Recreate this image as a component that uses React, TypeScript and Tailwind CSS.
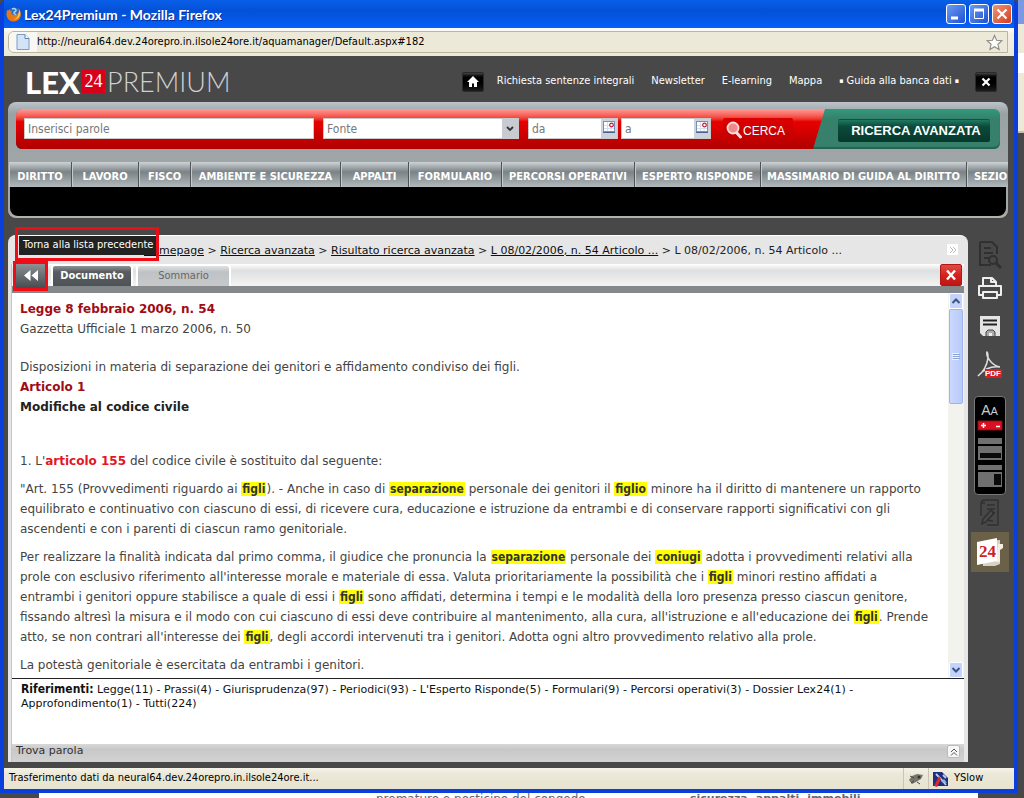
import React from "react";

const verdana = "font-['DejaVu_Sans',sans-serif]";
const tahoma = "font-['DejaVu_Sans_Condensed','DejaVu_Sans',sans-serif]";

function FirefoxIcon() {
  return (
    <svg viewBox="0 0 16 16" className="size-4" aria-hidden="true">
      <circle cx="8.500" cy="7.500" r="6" fill="#2b6fc4" />
      <path d="M6 3c2-1 4 0 4 1.500s-2 1-2 2.500 2 1 3 3" fill="none" stroke="#a6d4f5" strokeWidth="1.500" />
      <path d="M1 4c1 1 2 0 3-1-.5 2 1 2 2.500 2.500C5 6 5 7 6 8c1 1.500 3 1.500 5 .5 2-1 2.500-4 1-6.500 5 4 3.500 13-4 13.500C3 16 .500 11.500.500 8 .500 6 1 5 1 4z" fill="#e87817" />
      <path d="M13.500 4c2 5-1 9.500-6 9.500 3-1 5-3 5-6z" fill="#fbd25a" />
    </svg>
  );
}

function MagnifierIcon() {
  return (
    <svg viewBox="0 0 16 18" className="h-[18px] w-4" aria-hidden="true">
      <path d="M10 11l4.500 5" stroke="#f6dede" strokeWidth="3" strokeLinecap="round" />
      <circle cx="7" cy="7" r="5.500" fill="#f08a8a" stroke="#f9dcdc" strokeWidth="1.800" />
    </svg>
  );
}

function CalendarIcon() {
  return (
    <svg viewBox="0 0 12 12" className="size-3" aria-hidden="true">
      <rect x=".5" y=".5" width="11" height="10" fill="#fff" stroke="#7591b8" />
      <path d="M1 4.500h10M1 7.500h10M4.500 1v9M8 4v6" stroke="#d5deea" />
      <path d="M0 11.500h12" stroke="#47648f" />
      <circle cx="8.500" cy="4" r="1.800" fill="#fff" stroke="#c2183a" strokeWidth="1.200" />
    </svg>
  );
}

function DateField({ label, width }: { label: string; width: string }) {
  return (
    <div className={`flex h-[21px] border border-[#c9c9c9] bg-white ${width}`}>
      <input aria-label={label} placeholder={label} className={`min-w-0 flex-1 px-[3px] text-[12px] outline-none placeholder:text-[#777] ${tahoma}`} />
      <button aria-label={`Calendario ${label}`} className="flex w-4 justify-center bg-[#cdd3dc] pt-[2px]">
        <CalendarIcon />
      </button>
    </div>
  );
}

const links = ["Richiesta sentenze integrali", "Newsletter", "E-learning", "Mappa"];

const sections = [
  { name: "DIRITTO", width: "w-[63px]" },
  { name: "LAVORO", width: "w-[67px]" },
  { name: "FISCO", width: "w-[52px]" },
  { name: "AMBIENTE E SICUREZZA", width: "w-[150px]" },
  { name: "APPALTI", width: "w-[68px]" },
  { name: "FORMULARIO", width: "w-[93px]" },
  { name: "PERCORSI OPERATIVI", width: "w-[133px]" },
  { name: "ESPERTO RISPONDE", width: "w-[126px]" },
  { name: "MASSIMARIO DI GUIDA AL DIRITTO", width: "w-[206px]" },
  { name: "SEZIO", width: "w-[50px] pr-[2px]" },
];

function TitleBar() {
  const box = "flex size-5 items-center justify-center rounded-[3px] border border-white";
  return (
    <div className="flex h-7 items-center bg-linear-to-b from-[#0a5fe8] via-[#0450d8] via-40% to-[#0660fa] pr-[2px] pl-[2px]">
      <FirefoxIcon />
      <h1 className="flex-1 pt-px pl-[2px] font-['Lato',sans-serif] text-[14px] font-bold text-white [text-shadow:1px_1px_0_#0a2a90]">
        Lex24Premium - Mozilla Firefox
      </h1>
      <div className="flex gap-[3px]">
        <button aria-label="Riduci a icona" className={`${box} bg-linear-to-br from-[#6f9bf5] to-[#1c4fd0]`}>
          <svg viewBox="0 0 18 18" className="size-[18px]"><path d="M4 13h7" stroke="#fff" strokeWidth="3" /></svg>
        </button>
        <button aria-label="Ingrandisci" className={`${box} bg-linear-to-br from-[#6f9bf5] to-[#1c4fd0]`}>
          <svg viewBox="0 0 18 18" className="size-[18px]"><path d="M4.500 5v8.500h9V5" fill="none" stroke="#fff" /><path d="M4 5h10" stroke="#fff" strokeWidth="3" /></svg>
        </button>
        <button aria-label="Chiudi finestra" className={`${box} bg-linear-to-br from-[#f0937a] to-[#d03a12]`}>
          <svg viewBox="0 0 18 18" className="size-[18px]"><path d="M4.500 4.500l9 9M13.500 4.500l-9 9" stroke="#fff" strokeWidth="2.200" /></svg>
        </button>
      </div>
    </div>
  );
}

function AddressBar() {
  return (
    <div className="flex h-7 items-center bg-linear-to-b from-white via-[#f3f1e4] via-20% to-[#ece9d8] px-1 pr-[6px]">
      <div className="flex h-[22px] flex-1 items-center rounded-l-[6px] border border-[#b9b59f] bg-[#ece9d8]">
        <span className="flex h-5 w-7 items-center justify-center rounded-l-[5px] bg-[#f8f7f1]">
          <svg viewBox="0 0 14 16" className="h-4 w-[14px]" aria-hidden="true">
            <path d="M1 .500h8l4 4v11H1z" fill="#d3e4f8" stroke="#7d9cc4" />
            <path d="M9 .500v4h4" fill="#fff" stroke="#5b82b8" />
          </svg>
        </span>
        <input
          aria-label="Indirizzo"
          defaultValue="http://neural64.dev.24orepro.in.ilsole24ore.it/aquamanager/Default.aspx#182"
          className={`flex-1 bg-transparent pt-px text-[11px] text-black outline-none ${tahoma}`}
        />
        <button aria-label="Aggiungi ai preferiti" className="mr-1">
          <svg viewBox="0 0 18 18" className="size-[17px]">
            <path d="M9 1.500l2.200 5.200 5.600.500-4.200 3.700 1.300 5.500L9 13.500l-4.900 2.900 1.300-5.500L1.200 7.200l5.600-.500z" fill="#fdfdfb" stroke="#8f8f8a" strokeWidth="1.200" />
          </svg>
        </button>
      </div>
    </div>
  );
}

function SiteHeader() {
  const dark = "flex h-5 w-[22px] items-center justify-center rounded-[2px] border border-[#2a2a2a] bg-linear-to-b from-[#444] via-black via-30% to-[#1c1c1c]";
  const bullet = <span className="text-[7px]">▪</span>;
  return (
    <header className="flex h-[46px] items-center justify-between pt-[5px] pr-[17px] pl-[21px]">
      <div className="flex items-center font-['Lato',sans-serif] leading-6 text-white">
        <span className="text-[31px] font-black">LEX</span>
        <span className="ml-[2px] flex h-[23px] w-[23px] items-center justify-center bg-[#d9001b] pb-[2px] font-['Liberation_Serif',serif] text-[18px]">24</span>
        <span className="ml-[2px] text-[27px] font-light text-[#d0d0d0]">PREMIUM</span>
      </div>
      <nav className={`flex items-center text-[11px] text-white ${tahoma}`}>
        <button aria-label="Home" className={`mr-[13px] ${dark}`}>
          <svg viewBox="0 0 12 12" className="size-3"><path d="M6 0l6 6h-2v5H7V7.500H5V11H2V6H0z" fill="#fff" /></svg>
        </button>
        <div className="flex gap-[17px]">
          {links.map((l) => (
            <a key={l} href="#" className="whitespace-nowrap">{l}</a>
          ))}
          <a href="#" className="flex items-center gap-[3px] whitespace-nowrap">{bullet}Guida alla banca dati{bullet}</a>
        </div>
        <button aria-label="Esci" className={`ml-[16px] ${dark}`}>
          <svg viewBox="0 0 10 10" className="size-[10px]"><path d="M1.500 1.500l7 7M8.500 1.500l-7 7" stroke="#fff" strokeWidth="2.200" /></svg>
        </button>
      </nav>
    </header>
  );
}

function SearchPanel() {
  return (
    <section className="mr-[6px] ml-1 overflow-hidden rounded-[8px] border-b-2 border-[#b3b1a8] bg-linear-to-b from-[#bcc4c9] via-[#9ba2a5] via-10% to-[#a3a9ab]">
      <div className="px-2 pt-[7px]">
        <form className="flex h-10 overflow-hidden rounded-[6px] bg-linear-to-b from-[#2f9a7c] via-[#37806b] via-25% to-[#37806b] shadow-[inset_0_-2px_1px_#24634f]" onSubmit={(e) => e.preventDefault()}>
          <div className="flex flex-1 items-start bg-linear-to-b from-[#ff9a9a] via-[#ea0000] via-30% to-[#b00000] pt-[9px] pl-2 [clip-path:polygon(0_0,100%_0,calc(100%-12px)_100%,0_100%)]">
            <input aria-label="Inserisci parole" placeholder="Inserisci parole" className={`h-[21px] w-[290px] border border-[#c9c9c9] bg-white px-[3px] text-[12px] outline-none placeholder:text-[#777] ${tahoma}`} />
            <div className="ml-[9px] flex h-[21px] w-[196px] border border-[#c9c9c9] bg-white">
              <input aria-label="Fonte" placeholder="Fonte" className={`min-w-0 flex-1 px-[3px] text-[12px] outline-none placeholder:text-[#777] ${tahoma}`} />
              <button aria-label="Apri elenco fonti" className="flex w-4 items-center justify-center bg-[#c8ccd2]">
                <svg viewBox="0 0 8 6" className="h-[6px] w-2"><path d="M1 1l3 3 3-3" fill="none" stroke="#333" strokeWidth="1.800" /></svg>
              </button>
            </div>
            <div className="ml-[9px] flex gap-[3px]">
              <DateField label="da" width="w-[90px]" />
              <DateField label="a" width="w-[90px]" />
            </div>
            <button className="ml-3 flex h-[24px] w-[70px] items-center rounded-[2px] bg-linear-to-b from-[#dc0000] to-[#c00000] pl-[3px] font-['Liberation_Sans',sans-serif] text-[12px] text-white">
              <MagnifierIcon />
              <span className="pt-px pl-px">CERCA</span>
            </button>
          </div>
          <div className="flex w-[175px] items-start justify-end pt-[10px] pr-[10px]">
            <button className="h-[23px] w-[152px] rounded-[2px] border-t border-[#0d5441] bg-linear-to-b from-[#1f7a62] via-[#0b4a3a] via-30% to-[#06392c] pl-1 font-['Liberation_Sans',sans-serif] text-[13px] font-bold whitespace-nowrap text-white">
              RICERCA AVANZATA
            </button>
          </div>
        </form>
      </div>
      <nav className={`mt-[13px] flex h-[25px] overflow-hidden px-px text-[11px] font-bold text-white ${tahoma}`}>
        {sections.map((s) => (
          <a key={s.name} href="#" className={`flex shrink-0 items-center justify-center border-r border-r-[#4d5356] bg-linear-to-b from-[#cfd3d6] via-[#7b8387] via-40% to-[#b3babd] pt-[5px] whitespace-nowrap shadow-[inset_1px_0_0_#c5cacc] ${s.width}`}>
            {s.name}
          </a>
        ))}
      </nav>
      <div className="mx-[2px] h-[29px] rounded-b-[8px] bg-black" />
    </section>
  );
}

const Hit = ({ children }: { children: React.ReactNode }) => (
  <mark className={`bg-[#ffff00] px-px font-bold text-[#333] ${tahoma}`}>{children}</mark>
);

function Crumbs() {
  const crumb = "text-[#111] underline";
  return (
    <div className={`relative flex h-7 items-center pt-[2px] pl-[133px] text-[11px] whitespace-nowrap text-[#222] ${verdana}`}>
      <p>
        <a href="#" className={crumb}>Homepage</a> &gt; <a href="#" className={crumb}>Ricerca avanzata</a> &gt;{" "}
        <a href="#" className={crumb}>Risultato ricerca avanzata</a> &gt;{" "}
        <a href="#" className={crumb}>L 08/02/2006, n. 54 Articolo ...</a> &gt; L 08/02/2006, n. 54 Articolo ...
      </p>
      <button aria-label="Espandi" className="absolute top-2 right-[6px] flex h-[11px] w-[11px] items-center justify-center bg-white">
        <svg viewBox="0 0 8 8" className="size-2"><path d="M1 1l3 3-3 3M4 1l3 3-3 3" fill="none" stroke="#bbb" /></svg>
      </button>
      <div className="absolute -top-[9px] left-1 z-10 h-[34px] w-[144px] border-[3px] border-[#ee0d17] pt-[6px] pl-px">
        <div role="tooltip" className={`h-[19px] bg-[#222] pl-1 text-[11px] leading-[18px] whitespace-nowrap text-white ${tahoma}`}>
          Torna alla lista precedente
        </div>
      </div>
    </div>
  );
}

function Tabs() {
  return (
    <div className={`flex h-[29px] items-start border-b-[7px] border-[#84888b] bg-linear-to-b from-white via-[#dedfe0] via-30% to-[#f4f4f4] text-[11px] ${verdana}`}>
      <button aria-label="Torna alla lista precedente" className="relative z-20 mt-[-3px] ml-px flex h-[30px] w-[35px] shrink-0 items-center justify-center border-[3px] border-[#ee0d17] bg-linear-to-b from-[#8b9194] to-[#474c50]">
        <svg viewBox="0 0 16 12" className="h-3 w-4"><path d="M7.500 0v11L1 5.500zM15 0v11L8.500 5.500z" fill="#fff" /></svg>
      </button>
      <button className="ml-[3px] h-[22px] w-[82px] rounded-t-[4px] border-2 border-b-0 border-white bg-linear-to-b from-[#8d9396] via-[#565c60] via-30% to-[#4d5357] text-[11px] font-bold text-white">
        <span className={tahoma}>Documento</span>
      </button>
      <button className={`ml-[3px] h-[22px] w-[95px] rounded-t-[4px] border-2 border-b-0 border-white bg-linear-to-b from-[#e0e2e3] via-[#bfc2c4] via-30% to-[#c6c9ca] text-[11px] text-[#666] ${tahoma}`}>Sommario</button>
      <button aria-label="Chiudi documento" className="mr-[2px] ml-auto flex h-[22px] w-[22px] items-center justify-center rounded-[2px] border border-[#b01818] bg-linear-to-b from-[#e04a44] via-[#d6221e] via-50% to-[#c01512]">
        <svg viewBox="0 0 12 12" className="size-3"><path d="M2 1.500l8 9M10 1.500l-8 9" stroke="#fff" strokeWidth="2.400" /></svg>
      </button>
    </div>
  );
}

function Scrollbar() {
  const end = "flex h-4 w-full items-center justify-center rounded-[2px] border border-white bg-[#c3d3fb]";
  return (
    <div className="flex w-4 flex-col bg-[#f3f3ee] px-px">
      <button aria-label="Scorri su" className={end}>
        <svg viewBox="0 0 10 8" className="h-2 w-[10px]"><path d="M1.500 6L5 2.500 8.500 6" fill="none" stroke="#3d5583" strokeWidth="2" /></svg>
      </button>
      <div className="flex h-[95px] items-center justify-center rounded-[2px] border border-[#9db5ee] bg-linear-to-r from-[#c9d8fd] to-[#b9cafa]">
        <svg viewBox="0 0 8 8" className="size-2"><path d="M0 .500h7M0 2.500h7M0 4.500h7M0 6.500h7" stroke="#eef3ff" /><path d="M1 1.500h7M1 3.500h7M1 5.500h7" stroke="#8ca4dc" /></svg>
      </div>
      <div className="flex-1" />
      <button aria-label="Scorri giù" className={end}>
        <svg viewBox="0 0 10 8" className="h-2 w-[10px]"><path d="M1.500 2L5 5.500 8.500 2" fill="none" stroke="#3d5583" strokeWidth="2" /></svg>
      </button>
    </div>
  );
}

function DocumentText() {
  return (
    <article className={`min-w-0 flex-1 overflow-hidden pt-[6px] pl-2 text-[12px] leading-5 whitespace-nowrap text-[#444] ${verdana}`}>
      <h2 className="font-bold text-[#a00c14]">Legge 8 febbraio 2006, n. 54</h2>
      <p>Gazzetta Ufficiale 1 marzo 2006, n. 50</p>
      <p className="mt-[18px]">Disposizioni in materia di separazione dei genitori e affidamento condiviso dei figli.</p>
      <h3 className="font-bold text-[#a00c14]">Articolo 1</h3>
      <h4 className="font-bold text-[#222]">Modifiche al codice civile</h4>
      <div className="mt-[34px] flex flex-col gap-2">
        <p>1. L'<a href="#" className="font-bold text-[#e3171f]">articolo 155</a> del codice civile è sostituito dal seguente:</p>
        <p>
          "Art. 155 (Provvedimenti riguardo ai <Hit>figli</Hit>). - Anche in caso di <Hit>separazione</Hit> personale dei genitori il <Hit>figlio</Hit> minore ha il diritto di mantenere un rapporto<br />
          equilibrato e continuativo con ciascuno di essi, di ricevere cura, educazione e istruzione da entrambi e di conservare rapporti significativi con gli<br />
          ascendenti e con i parenti di ciascun ramo genitoriale.
        </p>
        <p>
          Per realizzare la finalità indicata dal primo comma, il giudice che pronuncia la <Hit>separazione</Hit> personale dei <Hit>coniugi</Hit> adotta i provvedimenti relativi alla<br />
          prole con esclusivo riferimento all'interesse morale e materiale di essa. Valuta prioritariamente la possibilità che i <Hit>figli</Hit> minori restino affidati a<br />
          entrambi i genitori oppure stabilisce a quale di essi i <Hit>figli</Hit> sono affidati, determina i tempi e le modalità della loro presenza presso ciascun genitore,<br />
          fissando altresì la misura e il modo con cui ciascuno di essi deve contribuire al mantenimento, alla cura, all'istruzione e all'educazione dei <Hit>figli</Hit>. Prende<br />
          atto, se non contrari all'interesse dei <Hit>figli</Hit>, degli accordi intervenuti tra i genitori. Adotta ogni altro provvedimento relativo alla prole.
        </p>
        <p>La potestà genitoriale è esercitata da entrambi i genitori.</p>
      </div>
    </article>
  );
}

function DocumentPanel() {
  return (
    <main className="ml-1 flex min-w-0 flex-1 flex-col rounded-t-[8px] border-t border-white bg-[#e6e6e6] pr-1 pl-[3px]">
      <Crumbs />
      <div className="flex flex-1 flex-col border-l border-[#c4c4cc] bg-white">
        <Tabs />
        <div className="flex min-h-0 flex-1">
          <DocumentText />
          <Scrollbar />
        </div>
        <div className={`h-[66px] border-t border-[#222] pt-[3px] pl-[9px] text-[11px] leading-[14px] text-[#111] ${verdana}`}>
          <b className={`text-[12px] ${tahoma}`}>Riferimenti:</b> Legge(11) - Prassi(4) - Giurisprudenza(97) - Periodici(93) - L'Esperto Risponde(5) - Formulari(9) - Percorsi operativi(3) - Dossier Lex24(1) -
          <br />
          Approfondimento(1) - Tutti(224)
        </div>
        <div className={`flex h-[18px] items-center justify-between bg-linear-to-b from-[#d8d8d8] via-[#c8c8c8] via-30% to-[#d2d2d2] pr-1 pb-[3px] pl-1 text-[11px] text-[#333] ${verdana}`}>
          <span>Trova parola</span>
          <button aria-label="Apri ricerca parola" className="flex size-[13px] items-center justify-center rounded-[2px] border border-[#bbb] bg-[#f6f6f6]">
            <svg viewBox="0 0 8 8" className="size-2"><path d="M1 4l3-3 3 3M1 7.500l3-3 3 3" fill="none" stroke="#555" /></svg>
          </button>
        </div>
      </div>
    </main>
  );
}

function ToolRail() {
  return (
    <aside className="flex w-[46px] flex-col items-center pt-1 pr-[3px]">
      <button aria-label="Cerca nel documento" className="h-[32px]">
        <svg viewBox="0 0 24 30" className="h-[30px] w-6" fill="none" stroke="#303030" strokeWidth="2">
          <path d="M2 2h12l5 5v7M2 2v23h11" /><path d="M6 8h7M6 13h9M6 18h6" /><circle cx="15" cy="20" r="4" /><path d="M18 23l5 5" strokeWidth="3" />
        </svg>
      </button>
      <button aria-label="Stampa" className="mt-[5px] h-6">
        <svg viewBox="0 0 26 24" className="h-6 w-[26px]" fill="none" stroke="#eee" strokeWidth="2" strokeLinejoin="round">
          <path d="M6 10V2h9l4 4v4M14 2v4h5" /><path d="M5 19H2v-9h22v9h-3" /><path d="M6 16h14v6H6z" />
        </svg>
      </button>
      <button aria-label="Salva" className="mt-[15px] h-[22px]">
        <svg viewBox="0 0 22 22" className="size-[22px]">
          <path d="M1 1h20v20H4l-3-3z" fill="#e4e4e4" /><path d="M4 5.500h14M4 9.500h14" stroke="#222" strokeWidth="1.800" /><path d="M7 21v-4l2-2h5l2 2v4" fill="#aaa" stroke="#444" /><path d="M10 18h3v3h-3z" fill="#eee" />
        </svg>
      </button>
      <button aria-label="Esporta in PDF" className="mt-[13px] h-[30px]">
        <svg viewBox="0 0 28 30" className="h-[30px] w-7">
          <path d="M2 26c5-4 9-11 10-18 0-4 0-6-1-6-1 3 3 13 13 15-8-1-16 2-22 9z" fill="none" stroke="#ddd" strokeWidth="1.600" />
          <path d="M9 19h17v9H9z" fill="#d42020" />
          <text x="9" y="26" fontFamily="Liberation Sans, sans-serif" fontSize="8" fontWeight="bold" fill="#fff">PDF</text>
        </svg>
      </button>
      <div className="mt-[16px] flex h-[99px] w-8 flex-col items-center rounded-[4px] border border-[#777] bg-black pt-1">
        <span className="font-['Liberation_Sans',sans-serif] text-[14px] leading-[18px] text-[#ccc]">A<span className="text-[11px]">A</span></span>
        <button aria-label="Dimensione testo" className="h-[11px]">
          <svg viewBox="0 0 26 11" className="h-[11px] w-[26px]"><path d="M1 1h24v9H1z" fill="#dc1023" stroke="#7c1515" /><path d="M4 5.500h5M6.500 3v5M19 6.500h4" stroke="#fff" strokeWidth="1.500" /></svg>
        </button>
        <button aria-label="Disposizione pannelli" className="mt-[7px] h-[50px]">
          <svg viewBox="0 0 26 50" className="h-[50px] w-[26px]">
            <path d="M1 0h24v6H1zM1 8h24v14H1zM1 27h24v5H1zM1 34h24v15H1z" fill="#707070" /><path d="M3 15h21v5H3zM17 36h7v11h-7z" fill="#0a0a0a" />
          </svg>
        </button>
      </div>
      <button aria-label="Note" className="mt-[4px] h-[28px]">
        <svg viewBox="0 0 22 28" className="h-7 w-[22px]" fill="none" stroke="#303030" strokeWidth="1.500">
          <path d="M4 1h15v25H8M4 1L2 4v13M2 4h4" /><path d="M8 6h8M8 10h8M13 14h3" /><path d="M3 25l1-5 8-9 3 3-8 9zM8 21l6 1" />
        </svg>
      </button>
      <button aria-label="Lex24" className="mt-[5px] flex h-10 w-[38px] items-center justify-center bg-[#6b6048]">
        <svg viewBox="0 0 28 32" className="h-8 w-7">
          <path d="M6 5l18-1v24l-5 2H7z" fill="#d8d0c0" /><path d="M22 8h5v4l-3 2v12h-4z" fill="#f4eee2" />
          <path d="M1 6l20-4v23L1 29z" fill="#fff" />
          <text x="3" y="21" fontFamily="Liberation Serif, serif" fontSize="17" fontWeight="bold" fill="#cc1f2b">24</text>
        </svg>
      </button>
    </aside>
  );
}

function StatusBar() {
  return (
    <footer className={`flex h-[21px] items-center bg-linear-to-b from-[#f5f3e8] via-[#ebe8d7] via-30% to-[#e6e3d0] text-[11px] text-black ${tahoma}`}>
      <span className="flex-1 pl-[5px]">Trasferimento dati da neural64.dev.24orepro.in.ilsole24ore.it...</span>
      <span className="flex h-full w-[25px] items-center justify-center border-l border-[#c9c5b2]">
        <svg viewBox="0 0 16 12" className="h-3 w-4" aria-hidden="true"><path d="M1 7l3-4 5-2 6 1-2 4-5 3-4 2z" fill="#77756c" /><path d="M2 3l4 2M9 9l3 2M3 10l3-2" stroke="#444" /><circle cx="11" cy="4" r="1.500" fill="#333" /></svg>
      </span>
      <span className="flex h-full w-[86px] items-center border-l border-[#c9c5b2] pl-1">
        <svg viewBox="0 0 16 16" className="size-4" aria-hidden="true"><path d="M0 1h9l6 6v8H0z" fill="#1f2f7c" /><path d="M3 3l5 5 5 6M10 4l3 3" stroke="#b8d0f0" strokeWidth="1.800" /><path d="M1 15L6 5l2 3-4 8z" fill="#d82a2a" /><path d="M8 11l3-3 3 4z" fill="#8fb6e6" /></svg>
        <span className="pl-[5px]">YSlow</span>
      </span>
    </footer>
  );
}

export default function App() {
  return (
    <div className="flex h-screen flex-col overflow-hidden bg-[#484848]">
      <div className="flex min-h-0 flex-1">
        <div className="flex min-w-0 flex-1 flex-col rounded-t-[6px] border-4 border-t-0 border-[#0b3fdc] bg-[#484848]">
          <TitleBar />
          <AddressBar />
          <SiteHeader />
          <SearchPanel />
          <div className="mt-[17px] mb-[6px] flex min-h-0 flex-1">
            <DocumentPanel />
            <ToolRail />
          </div>
          <StatusBar />
        </div>
        <div className="flex w-[6px] flex-col">
          <div className="h-6 bg-[#7b98e2]" />
          <div className="h-[29px] bg-[#ece9d8]" />
          <div className="h-5 bg-white" />
          <div className="h-[60px] border-b-2 border-[#c5c2b4] bg-[#ece9d8]" />
        </div>
      </div>
      <div className={`flex h-[5px] overflow-hidden pr-[46px] pl-[39px] text-[12px] leading-3 text-[#666] ${verdana}`}>
        <div className="flex flex-1 bg-white pl-[337px] whitespace-nowrap">
          <span className="w-[314px] shrink-0">prematuro e posticipo del congedo</span>
          <b className="text-[11px]">sicurezza, appalti, immobili</b>
        </div>
      </div>
    </div>
  );
}
